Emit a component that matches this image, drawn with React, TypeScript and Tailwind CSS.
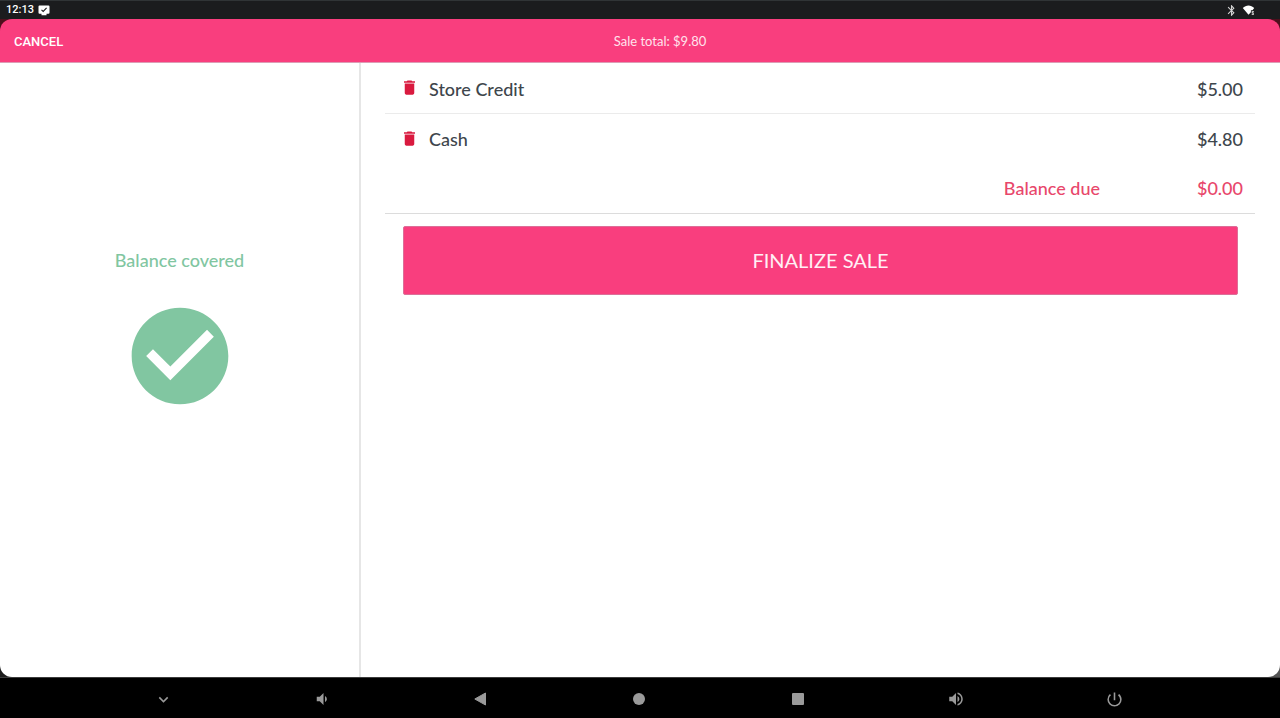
import React from "react";
import {
  MdBluetooth,
  MdCheckCircle,
  MdDelete,
  MdExpandMore,
  MdPowerSettingsNew,
  MdVolumeDown,
  MdVolumeUp,
} from "react-icons/md";

type Payment = {
  id: number;
  name: string;
  amount: number;
};

const payments: Payment[] = [
  { id: 1, name: "Store Credit", amount: 5 },
  { id: 2, name: "Cash", amount: 4.8 },
];

const formatMoney = (value: number) => `$${value.toFixed(2)}`;

const StatusBar: React.FC = () => (
  <div className="flex h-[19px] items-center justify-between border-t border-[#303436] bg-[#1b1c1e] pl-1.5 pr-6 font-['Roboto',sans-serif] text-[11px] font-medium text-white">
    <div className="flex items-center gap-1">
      <span>12:13</span>
      <svg viewBox="0 0 12 11" className="h-[11px] w-3" aria-hidden="true">
        <path
          fill="#ffffff"
          d="M1.5 0.5h9a1 1 0 0 1 1 1v6.3a1 1 0 0 1-1 1H8.500v1.400h-5V8.800h-2a1 1 0 0 1-1-1V1.500a1 1 0 0 1 1-1z"
        />
        <path d="M3.500 4.800l1.700 1.700 3.400-3.600" fill="none" stroke="#1b1c1e" strokeWidth="1.100" />
      </svg>
    </div>
    <div className="flex items-center gap-1">
      <MdBluetooth size={13} color="#d4d4d4" />
      <svg viewBox="0 0 14 12" className="h-3 w-3.5" aria-hidden="true">
        <path fill="#ffffff" d="M.8 4.100C4 .6 9 .6 12.200 4.100L10.500 6.200H8.900v2L6.500 10.800z" />
        <path fill="#bdbdbd" d="M9.700 7h2.200v1.200H11v.6h.9v2.200H9.700V9.800h.9v-.6h-.9z" />
      </svg>
    </div>
  </div>
);

const Header: React.FC<{ total: number }> = ({ total }) => (
  <div className="bg-[#4d0f1d]">
    <header className="grid h-11 grid-cols-[40px_1fr] items-center rounded-t-xl border-b border-[#dc9db5] bg-[#f93e7e] pt-0.5 text-white">
      <button
        type="button"
        className="justify-self-start whitespace-nowrap pl-3.5 font-['Roboto',sans-serif] text-[13px] font-medium"
      >
        CANCEL
      </button>
      <p className="text-center text-[13px] text-[#ffe3ec]">
        Sale total: {formatMoney(total)}
      </p>
    </header>
  </div>
);

const PaymentTable: React.FC<{ total: number }> = ({ total }) => {
  const paid = payments.reduce((sum, payment) => sum + payment.amount, 0);

  return (
    <table className="w-full border-collapse text-lg text-[#3e464c]">
      <tbody>
        {payments.map((payment, index) => (
          <tr
            key={payment.id}
            className={
              index < payments.length - 1
                ? "h-[50px] border-b border-[#ebebeb]"
                : "h-[50px]"
            }
          >
            <td className="w-11 pl-[15px]">
              <button
                type="button"
                aria-label={`Remove ${payment.name}`}
                className="block"
              >
                <MdDelete size={19} color="#d91a3f" />
              </button>
            </td>
            <td className="pt-0.5 font-medium">{payment.name}</td>
            <td className="w-[140px] pr-3 pt-0.5 text-right font-medium">
              {formatMoney(payment.amount)}
            </td>
          </tr>
        ))}
      </tbody>
      <tfoot>
        <tr className="h-[50px] border-b border-[#dcdcdc] text-[#e8476b]">
          <td colSpan={2} className="pr-[15px] text-right font-medium">
            Balance due
          </td>
          <td className="pr-3 text-right font-medium">
            {formatMoney(total - paid)}
          </td>
        </tr>
      </tfoot>
    </table>
  );
};

const NavBar: React.FC = () => {
  const items = [
    { label: "Hide", icon: <MdExpandMore size={19} /> },
    { label: "Volume down", icon: <MdVolumeDown size={18} /> },
    {
      label: "Back",
      icon: (
        <svg viewBox="0 0 12 14" className="h-3.5 w-3" fill="currentColor">
          <path d="M11.500 1v12L.8 7z" stroke="currentColor" strokeLinejoin="round" />
        </svg>
      ),
    },
    { label: "Home", icon: <span className="block size-3 rounded-full bg-current" /> },
    { label: "Recent apps", icon: <span className="block size-3 rounded-[1px] bg-current" /> },
    { label: "Volume up", icon: <MdVolumeUp size={18} /> },
    { label: "Power", icon: <MdPowerSettingsNew size={19} /> },
  ];

  return (
    <nav className="grid h-[41px] grid-cols-7 border-t border-[#3c3c3c] bg-black pl-[84px] pr-[86px] pt-0.5 text-[#9a9a9a]">
      {items.map((item) => (
        <button
          key={item.label}
          type="button"
          aria-label={item.label}
          className="flex items-center justify-center"
        >
          {item.icon}
        </button>
      ))}
    </nav>
  );
};

const App: React.FC = () => {
  const total = 9.8;

  return (
    <div className="flex min-h-screen flex-col bg-black font-['Lato','Open_Sans',sans-serif]">
      <StatusBar />
      <Header total={total} />

      <div className="flex flex-1 bg-linear-to-r from-[#1c1c1c] to-[#555555]">
        <main className="flex flex-1 overflow-hidden rounded-b-xl bg-white">
          {/* Payment status */}
          <section className="flex w-[361px] flex-col items-center justify-center gap-6 border-r-2 border-[#e6e6e6] pb-20 text-[#81c6a1]">
            <h2 className="text-lg font-medium">Balance covered</h2>
            <MdCheckCircle size={116} />
          </section>

          {/* Payments taken so far */}
          <section className="flex-1 px-6 pr-[25px]">
            <PaymentTable total={total} />
            <div className="pl-[18px] pr-[17px] pt-3">
              <button
                type="button"
                className="h-[69px] w-full rounded-xs border border-[#dc6f98] bg-[#f93e7e] text-xl text-[#fff0f5]"
              >
                FINALIZE SALE
              </button>
            </div>
          </section>
        </main>
      </div>

      <NavBar />
    </div>
  );
};

export default App;
